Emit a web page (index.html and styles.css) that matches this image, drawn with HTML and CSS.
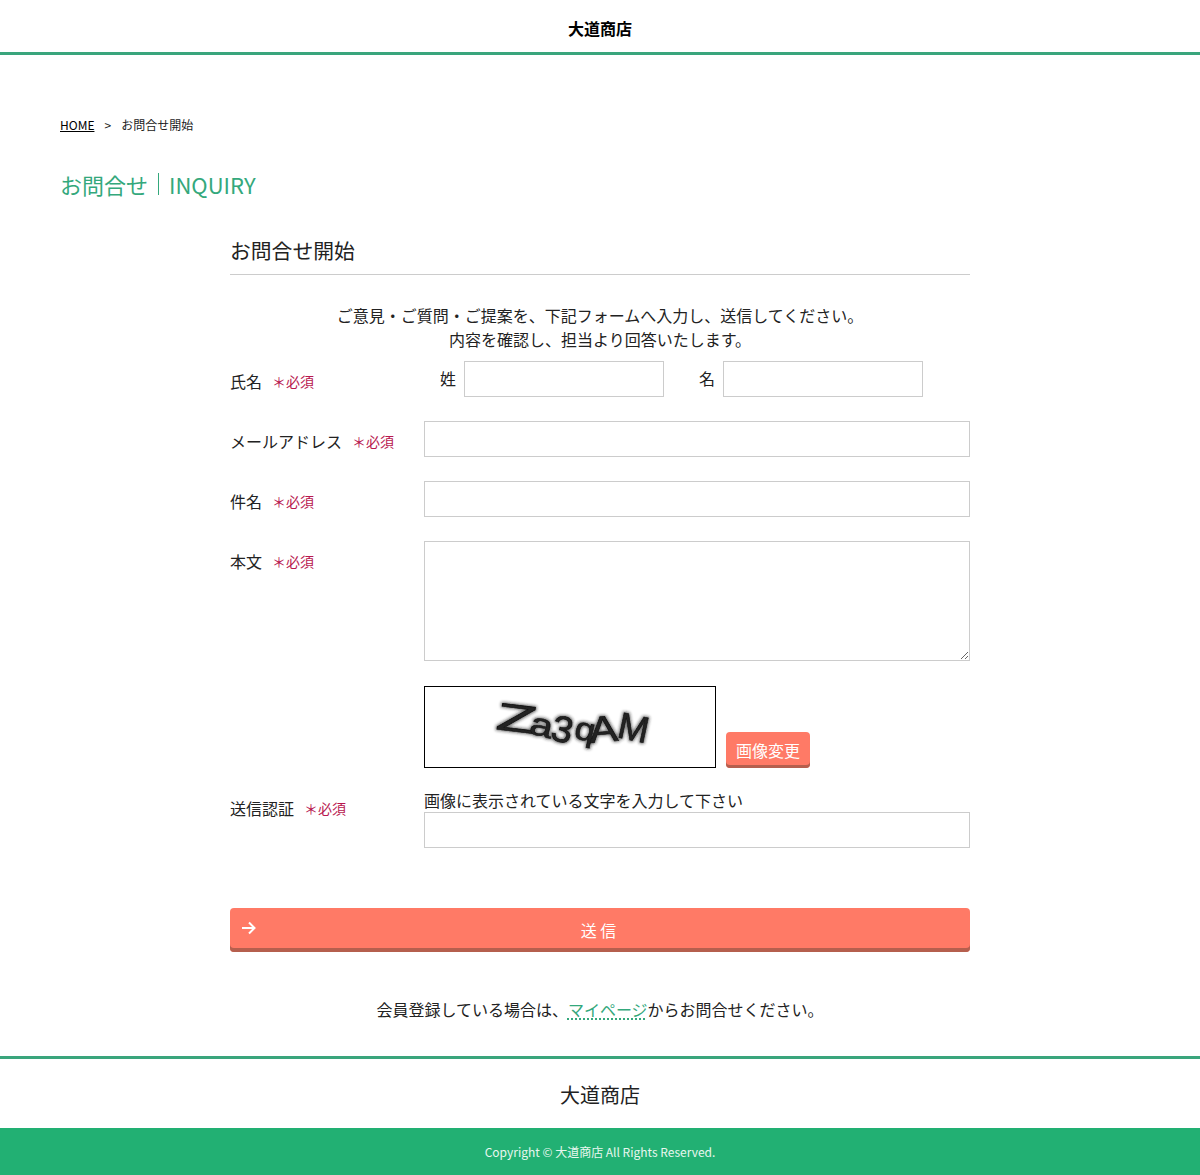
FILE: index.html
```html
<!DOCTYPE html>
<html lang="ja">
<head>
    <meta charset="utf-8">
    <title>お問合せ開始</title>
    <link rel="stylesheet" href="styles.css">
</head>
<body>
    <header class="site-header">
        <a class="site-name" href="#">大道商店</a>
    </header>

    <main class="main">
        <ul class="breadcrumb">
            <li><a href="#">HOME</a></li>
            <li class="sep">&gt;</li>
            <li>お問合せ開始</li>
        </ul>

        <h1 class="page-title"><span class="title-ja">お問合せ</span><span class="title-en">INQUIRY</span></h1>

        <section class="content">
            <h2 class="section-title">お問合せ開始</h2>
            <p class="lead">ご意見・ご質問・ご提案を、下記フォームへ入力し、送信してください。<br>内容を確認し、担当より回答いたします。</p>

            <form class="inquiry-form">
                <div class="row row-name">
                    <label class="row-label">氏名<span class="req">＊必須</span></label>
                    <div class="row-field name-fields">
                        <label class="name-part name-sei">姓<input type="text" class="text-input"></label>
                        <label class="name-part name-mei">名<input type="text" class="text-input"></label>
                    </div>
                </div>

                <div class="row">
                    <label class="row-label">メールアドレス<span class="req">＊必須</span></label>
                    <div class="row-field"><input type="text" class="text-input"></div>
                </div>

                <div class="row">
                    <label class="row-label">件名<span class="req">＊必須</span></label>
                    <div class="row-field"><input type="text" class="text-input"></div>
                </div>

                <div class="row">
                    <label class="row-label">本文<span class="req">＊必須</span></label>
                    <div class="row-field"><textarea class="text-area"></textarea></div>
                </div>

                <div class="row row-captcha">
                    <label class="row-label captcha-label">送信認証<span class="req">＊必須</span></label>
                    <div class="row-field">
                        <div class="captcha-top">
                            <div class="captcha-img">
                                <svg width="290" height="80" viewBox="0 0 290 80">
                                    <defs>
                                        <filter id="soft" x="-10%" y="-30%" width="120%" height="160%">
                                            <feMorphology in="SourceGraphic" operator="dilate" radius="1" result="fat"/>
                                            <feGaussianBlur in="fat" stdDeviation="1.500" result="halo"/>
                                            <feComponentTransfer in="halo" result="pale">
                                                <feFuncA type="linear" slope="0.600"/>
                                            </feComponentTransfer>
                                            <feGaussianBlur in="SourceGraphic" stdDeviation="0.500" result="core"/>
                                            <feMerge>
                                                <feMergeNode in="pale"/>
                                                <feMergeNode in="core"/>
                                            </feMerge>
                                        </filter>
                                    </defs>
                                    <g class="captcha-text" filter="url(#soft)">
                                        <text transform="translate(70 42) rotate(7) scale(2.100 1.200)">Z</text>
                                        <text transform="translate(103 46) rotate(14) scale(1.300 1)">a</text>
                                        <text transform="translate(124 52) rotate(14) scale(1.200 1.150)">3</text>
                                        <text transform="translate(148 51) rotate(12) scale(1.150 1)">q</text>
                                        <text transform="translate(165 56) rotate(-5) scale(1.350 1.150)">A</text>
                                        <text transform="translate(191 50) rotate(12) scale(1.150 1.150)">M</text>
                                    </g>
                                </svg>
                            </div>
                            <button type="button" class="change-btn">画像変更</button>
                        </div>
                        <p class="captcha-note">画像に表示されている文字を入力して下さい</p>
                        <input type="text" class="text-input">
                    </div>
                </div>

                <button type="submit" class="submit-btn">
                    <svg class="submit-arrow" width="16" height="14" viewBox="0 0 16 14">
                        <path d="M1 7h12.500M8 1.500L13.500 7 8 12.500" fill="none" stroke="#fff" stroke-width="2"/>
                    </svg>
                    送 信
                </button>
            </form>

            <p class="member-note">会員登録している場合は、<a href="#">マイページ</a>からお問合せください。</p>
        </section>
    </main>

    <footer class="site-footer">
        <p class="footer-name">大道商店</p>
        <p class="copyright">Copyright © 大道商店 All Rights Reserved.</p>
    </footer>
</body>
</html>
```

FILE: styles.css
```css
* {
    box-sizing: border-box;
}

body {
    margin: 0;
    font-family: "Noto Sans CJK JP", "Noto Sans", sans-serif;
    font-size: 16px;
    line-height: 24px;
    color: #222;
    background-color: #fff;
}

p, h1, h2, ul {
    margin: 0;
    padding: 0;
}

.site-header {
    height: 55px;
    border-bottom: 3px solid #3aa57c;
    text-align: center;
    padding-top: 16px;
}

.site-name {
    font-weight: bold;
    color: #000;
    text-decoration: none;
}

.main {
    padding: 60px 60px 0;
}

.breadcrumb {
    display: flex;
    list-style: none;
    font-size: 12px;
    line-height: 20px;
}

.breadcrumb a {
    color: #000;
}

.breadcrumb .sep {
    margin: 0 10px;
}

.page-title {
    margin-top: 33px;
    font-size: 22px;
    line-height: 32px;
    font-weight: normal;
    color: #34a87c;
    display: flex;
    align-items: center;
}

.title-ja {
    padding-right: 10px;
    border-right: 1px solid #34a87c;
    line-height: 22px;
    margin-right: 10px;
}

.content {
    width: 740px;
    margin: 35px auto 0;
}

.section-title {
    font-size: 20.8px;
    line-height: 30px;
    font-weight: normal;
    padding-bottom: 9px;
    border-bottom: 1px solid #ccc;
}

.lead {
    margin-top: 28px;
    text-align: center;
}

.row {
    display: flex;
    margin-bottom: 24px;
}

.row-name {
    margin-top: 10px;
}

.row-label {
    width: 194px;
    flex-shrink: 0;
    padding-top: 8px;
}

.req {
    position: relative;
    top: -1px;
    font-size: 14px;
    color: #b8174f;
    margin-left: 10px;
}

.row-field {
    flex: 1;
    min-width: 0;
}

.text-input {
    display: block;
    width: 100%;
    height: 36px;
    border: 1px solid #ccc;
    background-color: #fff;
    padding: 0 8px;
}

.text-area {
    display: block;
    width: 100%;
    height: 120px;
    border: 1px solid #ccc;
    background-color: #fff;
    padding: 8px;
}

.name-fields {
    display: flex;
    padding-left: 16px;
}

.name-part {
    display: flex;
    align-items: flex-start;
    gap: 8px;
    line-height: 34px;
}

.name-part .text-input {
    width: 200px;
}

.name-mei {
    margin-left: 35px;
}

.row-captcha {
    margin-top: 25px;
    margin-bottom: 60px;
}

.captcha-label {
    padding-top: 110px;
}

.captcha-top {
    display: flex;
    align-items: flex-end;
    gap: 10px;
}

.captcha-img {
    width: 292px;
    height: 82px;
    border: 1px solid #000;
    background-color: #fff;
}

.captcha-img svg {
    display: block;
}

.captcha-text {
    font-family: "Liberation Sans", sans-serif;
    font-size: 32px;
    fill: #222;
    stroke: #111;
    stroke-width: 0.500;
}

.change-btn {
    width: 84px;
    height: 36px;
    border: none;
    border-radius: 4px;
    background-color: #ff7a66;
    box-shadow: inset 0 -3px 0 #b55f4e;
    color: #fff;
    font-family: inherit;
    font-size: 16px;
    padding: 0;
}

.captcha-note {
    margin-top: 20px;
    margin-bottom: -1px;
    line-height: 24px;
    height: 25px;
}

.submit-btn {
    position: relative;
    display: block;
    width: 100%;
    height: 44px;
    border: none;
    border-radius: 4px;
    background-color: #ff7a66;
    box-shadow: inset 0 -4px 0 #b55f4e;
    color: #fff;
    font-family: inherit;
    font-size: 16px;
    padding: 0 3px 0 0;
}

.submit-arrow {
    position: absolute;
    left: 11px;
    top: 13px;
}

.member-note {
    margin-top: 45px;
    text-align: center;
}

.member-note a {
    color: #34a87c;
    text-decoration: underline dotted 2px #34a87c;
    text-underline-offset: 2px;
}

.site-footer {
    margin-top: 35px;
    border-top: 3px solid #3aa57c;
    text-align: center;
}

.footer-name {
    font-size: 20px;
    line-height: 30px;
    padding: 21px 0 18px;
}

.copyright {
    background-color: #22b073;
    color: #e8f7ef;
    font-size: 12px;
    line-height: 47px;
    height: 47px;
}
```
